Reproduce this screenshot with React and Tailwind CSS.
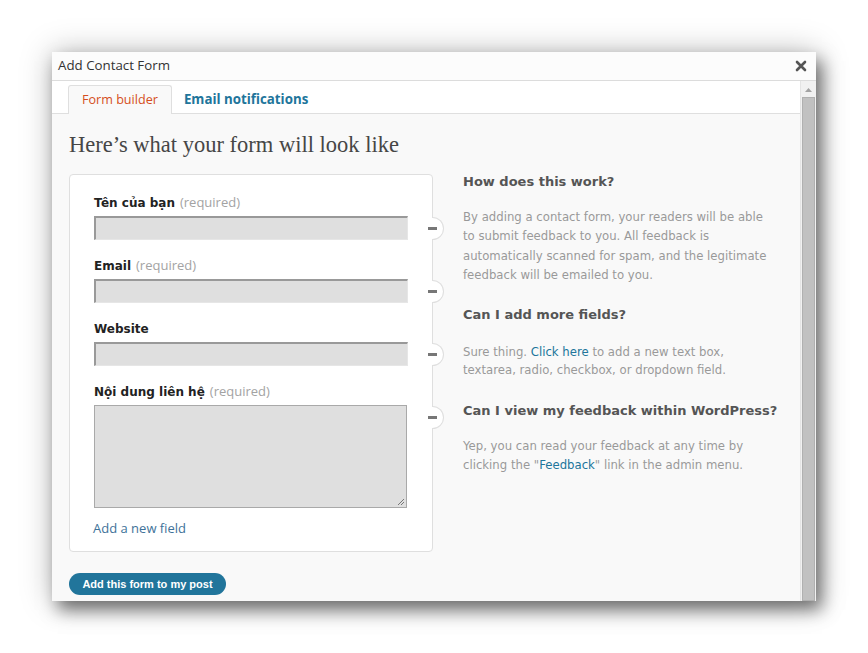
import React from "react";

const ui = { fontFamily: '"Open Sans", "Noto Sans", sans-serif' };
const verd = { fontFamily: '"DejaVu Sans", Verdana, sans-serif' };

// Half-round "remove field" tab that sits on the card's right border
function Minus() {
  return (
    <>
      <div className="absolute left-[338px] top-[22px] w-[12px] h-[23px] rounded-r-full bg-white border border-l-0 border-[#dfdfdf]" />
      <div className="absolute left-[334px] top-[32px] w-[9px] h-[3px] bg-[#777]" />
    </>
  );
}

function Field({ label, required, children }) {
  return (
    <div className="relative">
      <div className="h-[16px] flex items-center gap-[5px]">
        <span className="text-[12px] font-bold text-[#222]" style={verd}>{label}</span>
        {required && <span className="text-[13px] text-[#a3a3a3]" style={ui}>(required)</span>}
      </div>
      <div className="mt-[5px]">{children}</div>
      <Minus />
    </div>
  );
}

function Input() {
  return <div className="w-[314px] h-[24px] bg-[#dfdfdf] border-t-2 border-l-2 border-[#999] border-r border-r-[#e6e6e6] border-b border-b-[#e6e6e6]" />;
}

export default function App() {
  return (
    <div className="w-[868px] h-[653px] bg-white pt-[52px] pl-[52px]">
      <div className="w-[764px] h-[549px] flex flex-col bg-[#f9f9f9] shadow-[0_0_30px_rgba(0,0,0,0.25),6px_9px_16px_rgba(0,0,0,0.5)]">
        {/* title bar */}
        <div className="h-[29px] shrink-0 flex items-center justify-between pl-[6px] pr-[9px] bg-[#fcfcfc] border-b border-[#dcdcdc]">
          <span className="text-[13.3px] text-[#333]" style={ui}>Add Contact Form</span>
          <svg width="12" height="12" viewBox="0 0 12 12">
            <path d="M2 2 L10 10 M10 2 L2 10" stroke="#555" strokeWidth="2.6" strokeLinecap="round" />
          </svg>
        </div>

        <div className="flex flex-1 min-h-0">
          <div className="flex-1 flex flex-col min-w-0">
            {/* tabs */}
            <div className="h-[33px] shrink-0 bg-white border-b border-[#dfdfdf] flex items-end pl-[16px]">
              <div className="h-[29px] px-[13px] flex items-center bg-[#f9f9f9] border border-b-0 border-[#dfdfdf] rounded-t-[3px] mb-[-1px] text-[12.6px] text-[#d54e21]" style={ui}>
                Form builder
              </div>
              <div className="h-[29px] px-[12px] pt-[3px] flex items-center text-[13.3px] font-bold text-[#21759b]" style={ui}>
                Email notifications
              </div>
            </div>

            {/* body */}
            <div className="pl-[17px] pt-[18px]">
              <h1 className="text-[22.5px] leading-[26px] text-[#464646]" style={{ fontFamily: '"Liberation Serif", "DejaVu Serif", serif' }}>
                Here’s what your form will look like
              </h1>

              <div className="flex mt-[16px]">
                <div className="w-[364px] bg-white border border-[#dfdfdf] rounded-[4px] pl-[24px] pt-[20px] pb-[15px] flex flex-col gap-[18px]">
                  <Field label="Tên của bạn" required><Input /></Field>
                  <Field label="Email" required><Input /></Field>
                  <Field label="Website"><Input /></Field>
                  <Field label="Nội dung liên hệ" required>
                    <div className="relative w-[313px] h-[103px] bg-[#dfdfdf] border border-[#a9a9a9]">
                      <svg className="absolute right-[1px] bottom-[1px]" width="9" height="9" viewBox="0 0 9 9">
                        <path d="M8 2 L2 8 M8 5 L5 8" stroke="#777" strokeWidth="1" />
                      </svg>
                    </div>
                  </Field>
                  <div className="mt-[-6px] text-[13px] leading-[16px] text-[#3e7299] -ml-[1px]" style={ui}>Add a new field</div>
                </div>

                <div className="pl-[30px] w-[345px]" style={verd}>
                  <h3 className="text-[13px] font-bold text-[#555] leading-[16px]">How does this work?</h3>
                  <p className="mt-[18px] text-[11.7px] leading-[19.4px] text-[#999]">
                    By adding a contact form, your readers will be able to submit feedback to you. All feedback is automatically scanned for spam, and the legitimate feedback will be emailed to you.
                  </p>
                  <h3 className="mt-[21px] text-[13px] font-bold text-[#555] leading-[16px]">Can I add more fields?</h3>
                  <p className="mt-[20px] text-[11.7px] leading-[18.5px] text-[#999]">
                    Sure thing. <a className="text-[#21759b]">Click here</a> to add a new text box, textarea, radio, checkbox, or dropdown field.
                  </p>
                  <h3 className="mt-[23px] text-[13px] font-bold text-[#555] leading-[16px]">Can I view my feedback within WordPress?</h3>
                  <p className="mt-[18px] text-[11.7px] leading-[19px] text-[#999]">
                    Yep, you can read your feedback at any time by clicking the "<a className="text-[#21759b]">Feedback</a>" link in the admin menu.
                  </p>
                </div>
              </div>

              <button className="mt-[21px] h-[22px] w-[157px] rounded-full bg-[#21759b] text-white text-[11px] font-bold flex items-center justify-center" style={{ fontFamily: '"Liberation Sans", Arial, sans-serif' }}>
                Add this form to my post
              </button>
            </div>
          </div>

          {/* scrollbar */}
          <div className="w-[16px] shrink-0 bg-[#f1f1f1] border-l border-[#e4e4e4] flex flex-col pt-[2px]">
            <div className="h-[14px] flex items-center justify-center">
              <svg width="7" height="4" viewBox="0 0 7 4"><path d="M0 4 L3.5 0 L7 4 Z" fill="#a3a3a3" /></svg>
            </div>
            <div className="flex-1 mx-[1px] bg-[#c1c1c1] border border-[#b0b0b0]" />
          </div>
        </div>
      </div>
    </div>
  );
}
